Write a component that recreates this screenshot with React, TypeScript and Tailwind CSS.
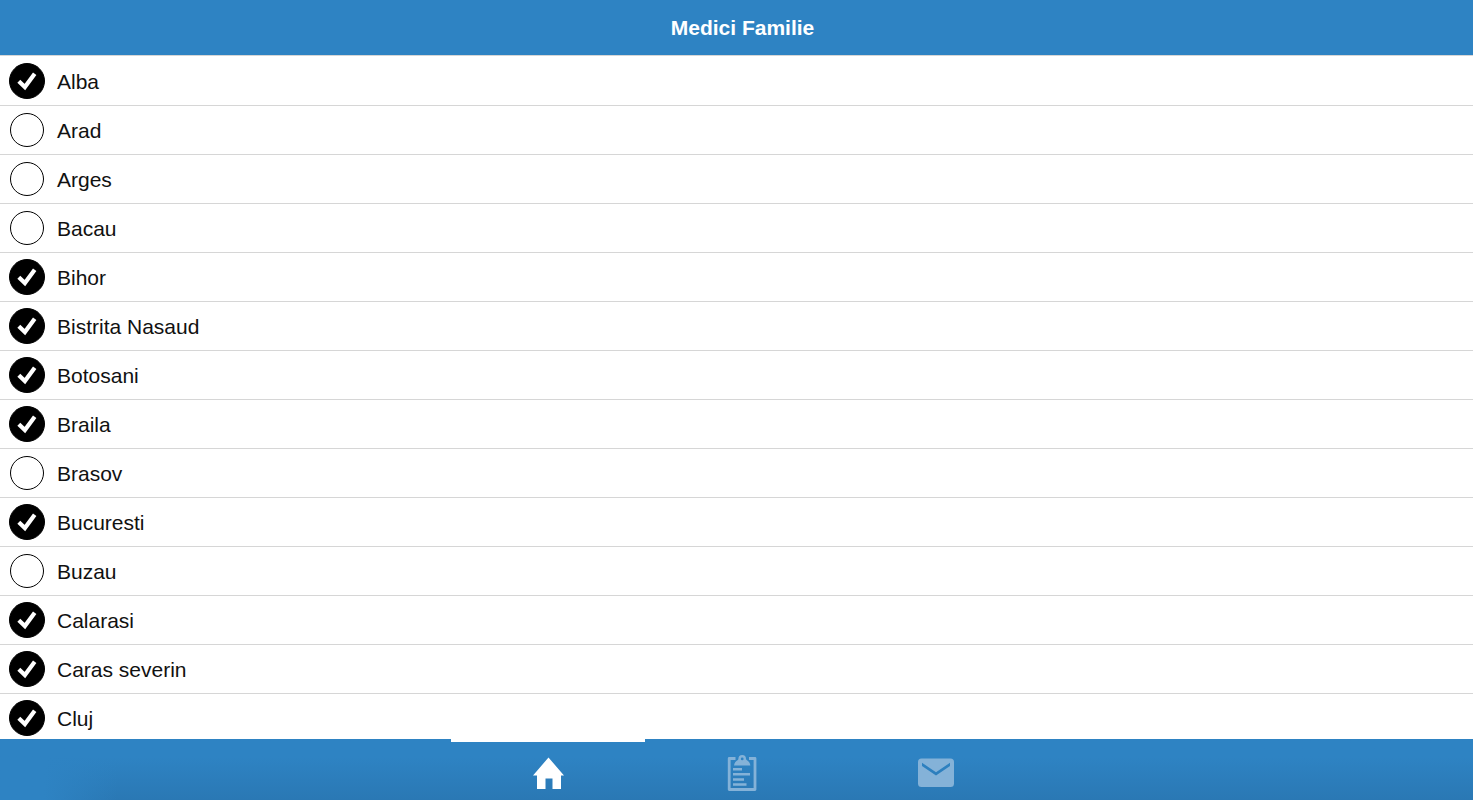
import { useState } from 'react';

const counties = [
  { name: 'Alba', selected: true },
  { name: 'Arad', selected: false },
  { name: 'Arges', selected: false },
  { name: 'Bacau', selected: false },
  { name: 'Bihor', selected: true },
  { name: 'Bistrita Nasaud', selected: true },
  { name: 'Botosani', selected: true },
  { name: 'Braila', selected: true },
  { name: 'Brasov', selected: false },
  { name: 'Bucuresti', selected: true },
  { name: 'Buzau', selected: false },
  { name: 'Calarasi', selected: true },
  { name: 'Caras severin', selected: true },
  { name: 'Cluj', selected: true },
];

function HomeIcon() {
  return (
    <svg viewBox="0 0 36 36" className="size-9" fill="currentColor" aria-hidden="true">
      <path d="M18.500 2.500 34 20.500H31V34h-8.500V23.500h-7V34H7V20.500H3Z" />
    </svg>
  );
}

function ClipboardIcon() {
  return (
    <svg viewBox="0 0 36 36" className="size-9" fill="none" stroke="currentColor" aria-hidden="true">
      <path d="M11.500 3.500H5.200V34.500H31V3.500H25" strokeWidth="2.800" strokeLinejoin="round" />
      <path
        d="M18.200 0a3.800 3.800 0 0 1 3.800 3.800c0 1.200 1 1.600 2 2.200 1.200.8 2 2.200 2.400 4.400H10c.4-2.200 1.200-3.600 2.400-4.400 1-.6 2-1 2-2.200A3.800 3.800 0 0 1 18.200 0Zm0 2.500a1.400 1.400 0 1 0 0 2.800 1.400 1.400 0 0 0 0-2.800Z"
        fill="currentColor"
        fillRule="evenodd"
        stroke="none"
      />
      <path d="M9 14.300h9M9 19.300h17M9 24.500h11M9 29.500h13.500" strokeWidth="2.600" />
    </svg>
  );
}

function MailIcon() {
  return (
    <svg viewBox="0 0 36 36" className="size-9" aria-hidden="true">
      <path
        d="M3.500 3.500h29A3.500 3.500 0 0 1 36 7v21.500a3.500 3.500 0 0 1-3.500 3.500h-29A3.500 3.500 0 0 1 0 28.500V7a3.500 3.500 0 0 1 3.500-3.500ZM4 7.800v3.200l14 9.500 14-9.500V7.800L18 17.200Z"
        fill="currentColor"
        fillRule="evenodd"
      />
    </svg>
  );
}

const tabs = [
  { id: 'home', label: 'Home', icon: HomeIcon },
  { id: 'list', label: 'List', icon: ClipboardIcon },
  { id: 'mail', label: 'Mail', icon: MailIcon },
];

function CountyRow({ name, selected, onToggle }: { name: string; selected: boolean; onToggle: () => void }) {
  return (
    <li className="border-b border-[#d6d6d6]">
      <label className="flex h-12 cursor-pointer items-center gap-3 pr-2 pl-[9px] text-[21px] leading-6 text-[#111]">
        <span className="grid size-9 shrink-0 place-items-center">
          <input
            type="checkbox"
            checked={selected}
            onChange={onToggle}
            className="col-start-1 row-start-1 size-[34px] appearance-none rounded-full border border-black checked:size-9 checked:bg-black"
          />
          {selected && (
            <svg
              viewBox="0 0 36 36"
              className="pointer-events-none col-start-1 row-start-1 size-9"
              fill="none"
              stroke="white"
              strokeWidth="4.200"
              aria-hidden="true"
            >
              <path d="M9.800 18.200 15.900 24 25.700 10.800" />
            </svg>
          )}
        </span>
        <span className="pt-0.5">{name}</span>
      </label>
    </li>
  );
}

export default function App() {
  const [rows, setRows] = useState(counties);
  const [activeTab, setActiveTab] = useState('home');

  const toggle = (name: string) => {
    setRows(rows.map((row) => (row.name === name ? { ...row, selected: !row.selected } : row)));
  };

  return (
    <div className="flex h-screen flex-col bg-white font-['Liberation_Sans',Arial,sans-serif]">
      <header className="flex h-14 shrink-0 items-center justify-center border-b border-[#d6d6d6] bg-[#2e83c3] pl-3">
        <h1 className="text-[21px] leading-6 font-bold text-white">Medici Familie</h1>
      </header>

      <main className="min-h-0 flex-1 overflow-hidden pt-px">
        <ul>
          {rows.map((row) => (
            <CountyRow key={row.name} name={row.name} selected={row.selected} onToggle={() => toggle(row.name)} />
          ))}
        </ul>
      </main>

      <nav className="shrink-0 bg-linear-to-b from-[#2e83c3] from-30% to-[#2a78b4]">
        <div className="flex h-[61px] justify-center bg-linear-to-r from-[#2e83c3] from-3% to-[#2e83c3]/0 to-8% pl-[11px]">
          {tabs.map(({ id, label, icon: Icon }) => (
            <button
              key={id}
              type="button"
              aria-label={label}
              onClick={() => setActiveTab(id)}
              className={`flex w-[194px] items-center justify-center border-t-3 pt-1 ${
                activeTab === id ? 'border-white text-white' : 'border-transparent text-[#84b2d8]'
              }`}
            >
              <Icon />
            </button>
          ))}
        </div>
      </nav>
    </div>
  );
}
